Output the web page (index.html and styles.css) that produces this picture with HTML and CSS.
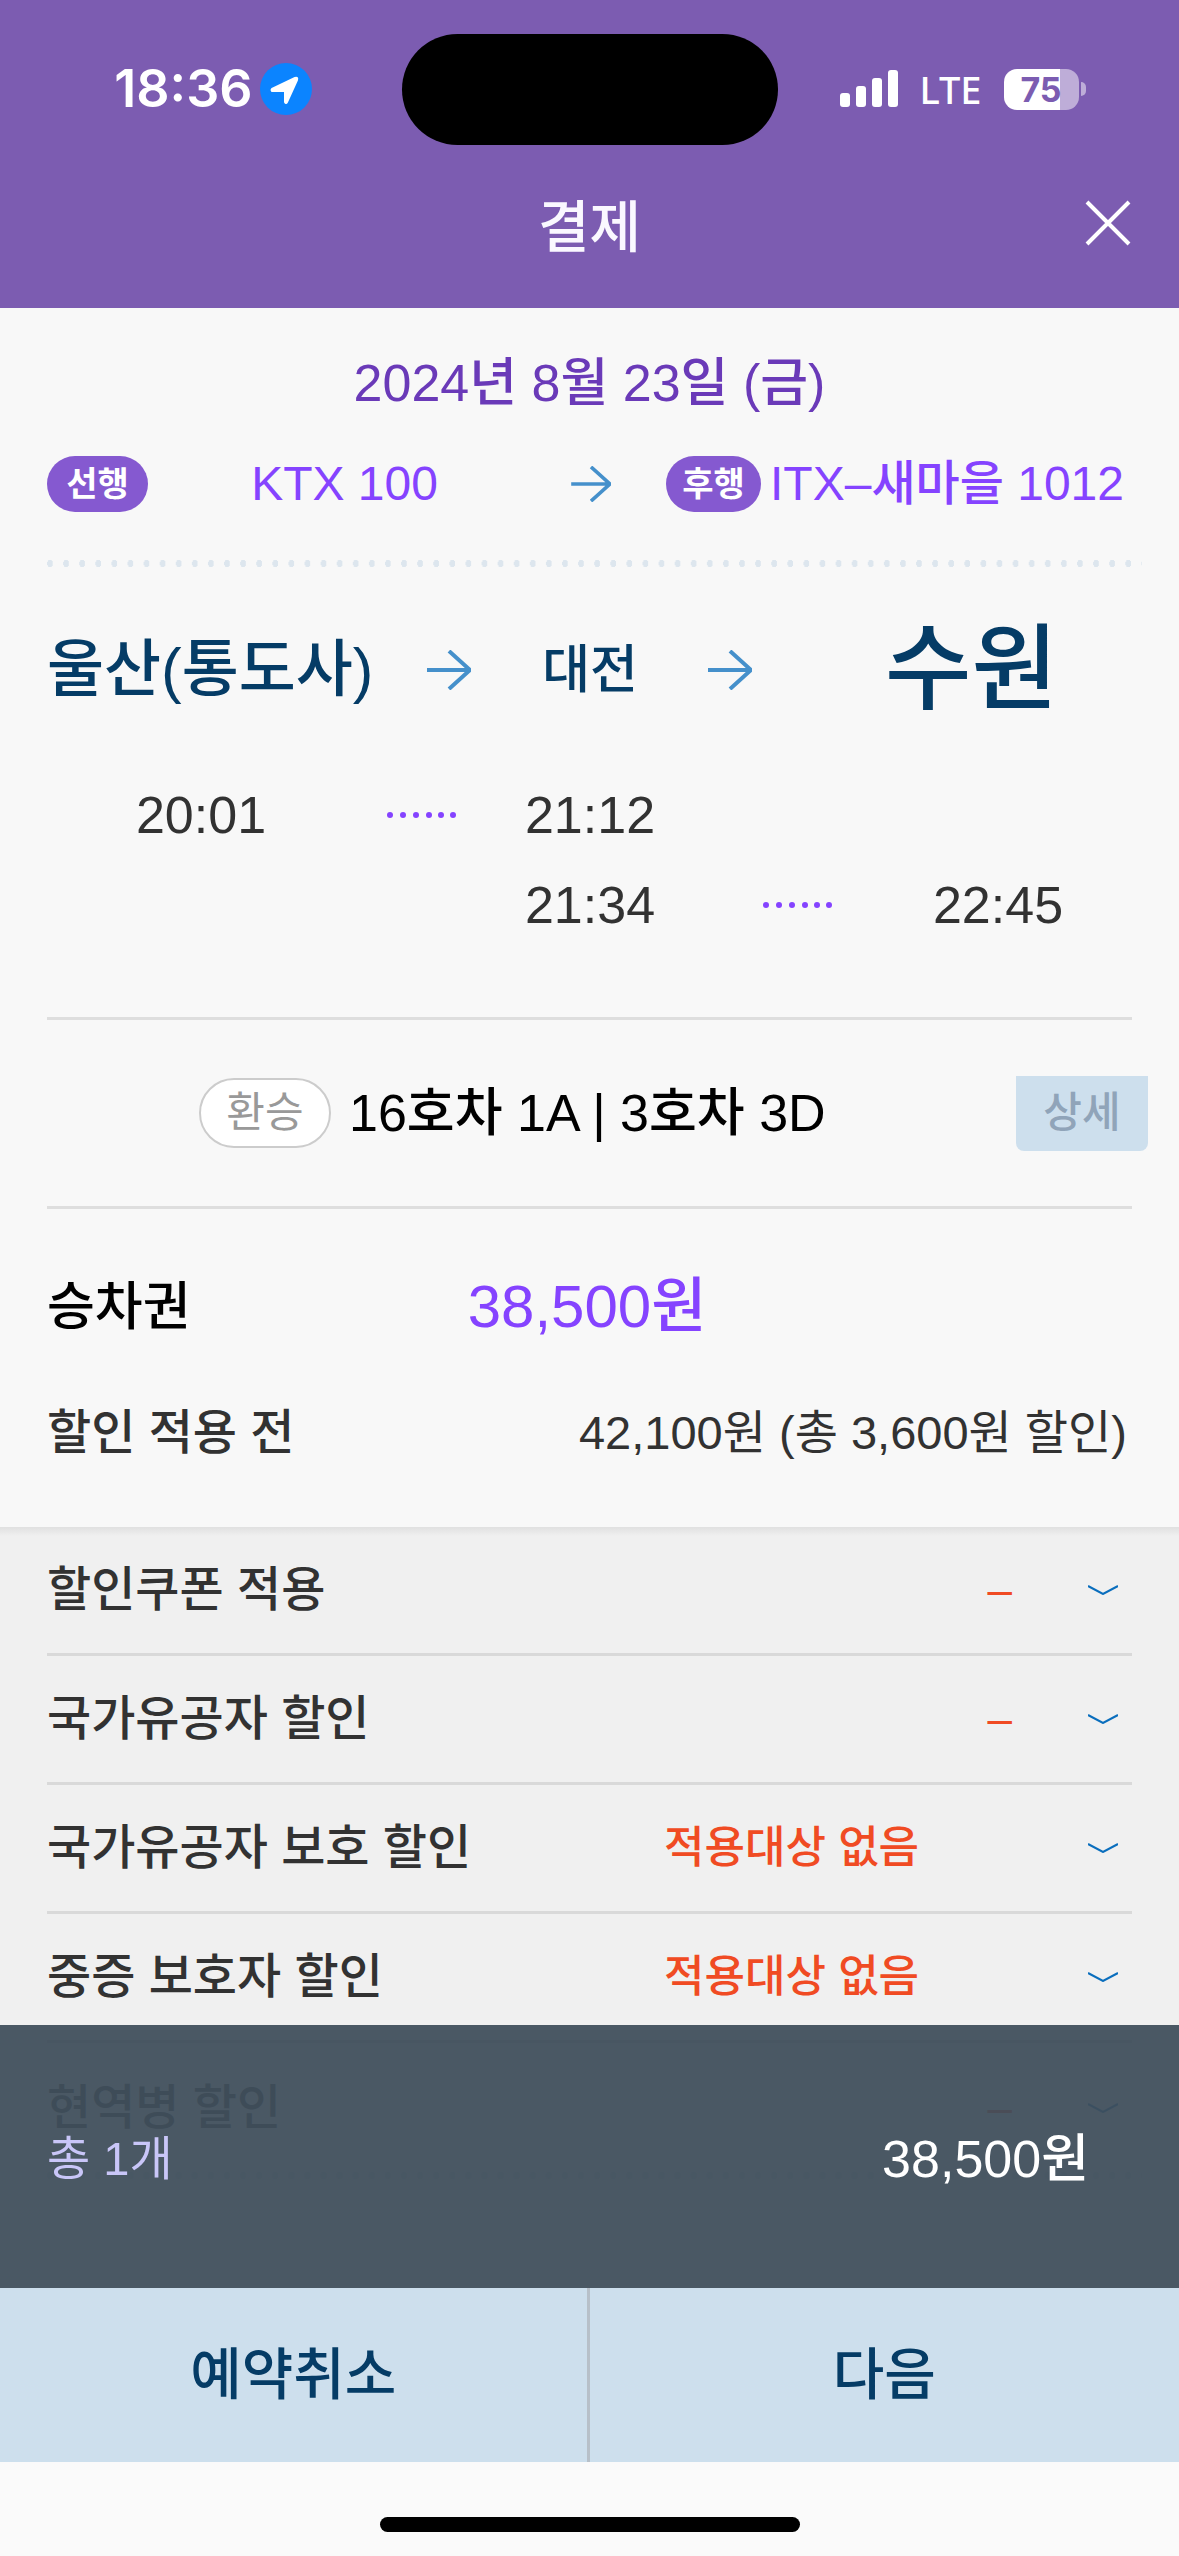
FILE: index.html
```html
<!DOCTYPE html>
<html lang="ko">
<head>
<meta charset="utf-8">
<meta name="viewport" content="width=device-width, initial-scale=1">
<title>결제</title>
<link rel="stylesheet" href="styles.css">
</head>
<body>
<svg class="defs" aria-hidden="true">
  <symbol id="arrow" viewBox="0 0 44 40"><path d="M0 20H43M22 1L43 20L22 39"/></symbol>
  <symbol id="chevron" viewBox="0 0 30 10"><path d="M0 1L15 9L30 1"/></symbol>
  <symbol id="dots" viewBox="0 0 72 8"><circle cx="4" cy="4" r="3"/><circle cx="17" cy="4" r="3"/><circle cx="30" cy="4" r="3"/><circle cx="43" cy="4" r="3"/><circle cx="55" cy="4" r="3"/><circle cx="67" cy="4" r="3"/></symbol>
</svg>
<div class="screen">
  <header class="header">
    <div class="status">
      <div class="status-left">
        <span class="clock">18:36</span>
        <svg class="location" viewBox="0 0 52 52" aria-hidden="true"><circle cx="26" cy="26" r="26"/><path d="M12 26L35 15Q38 14 37 17L27 39Q26 41 25 39V28H12Q11 27 12 26Z"/></svg>
      </div>
      <div class="island"></div>
      <div class="status-right">
        <svg class="signal" viewBox="0 0 58 38" aria-hidden="true"><rect x="0" y="23" width="10" height="14" rx="3"/><rect x="16" y="16" width="10" height="21" rx="3"/><rect x="32" y="8" width="10" height="29" rx="3"/><rect x="48" y="0" width="10" height="37" rx="3"/></svg>
        <span class="network">LTE</span>
        <span class="battery"><span class="battery-level">75</span><span class="battery-tip"></span></span>
      </div>
    </div>
    <div class="titlebar">
      <h1 class="title">결제</h1>
      <button class="close" type="button" aria-label="닫기"><svg viewBox="0 0 46 46" aria-hidden="true"><path d="M2 2L44 44M44 2L2 44"/></svg></button>
    </div>
  </header>

  <main class="main">
    <section class="trip">
      <p class="date">2024년 8월 23일 (금)</p>
      <div class="trains">
        <span class="badge">선행</span>
        <span class="train">KTX 100</span>
        <svg class="arrow arrow-small" aria-hidden="true"><use href="#arrow"/></svg>
        <span class="second-train"><span class="badge badge-narrow">후행</span><span class="train">ITX–새마을 1012</span></span>
      </div>
      <div class="dotted"></div>
      <div class="stations">
        <span class="station-from">울산(통도사)</span>
        <svg class="arrow" aria-hidden="true"><use href="#arrow"/></svg>
        <span class="station-via">대전</span>
        <svg class="arrow" aria-hidden="true"><use href="#arrow"/></svg>
        <span class="station-to">수원</span>
      </div>
      <div class="times">
        <time class="time-depart">20:01</time>
        <svg class="dots dots-first" aria-hidden="true"><use href="#dots"/></svg>
        <time class="time-via">21:12</time>
        <time class="time-leave">21:34</time>
        <svg class="dots dots-second" aria-hidden="true"><use href="#dots"/></svg>
        <time class="time-arrive">22:45</time>
      </div>
    </section>

    <section class="seat">
      <span class="transfer">환승</span>
      <span class="seat-text">16호차 1A | 3호차 3D</span>
      <button class="detail" type="button">상세</button>
    </section>

    <section class="fare">
      <div class="fare-row">
        <span class="fare-name">승차권</span>
        <span class="fare-amount">38,500원</span>
      </div>
      <div class="before-row">
        <span class="before-name">할인 적용 전</span>
        <span class="before-amount">42,100원 (총 3,600원 할인)</span>
      </div>
    </section>

    <section class="discounts">
      <button class="discount" type="button"><span class="discount-name">할인쿠폰 적용</span><span class="discount-value empty">–</span><svg class="chevron" aria-hidden="true"><use href="#chevron"/></svg></button>
      <button class="discount" type="button"><span class="discount-name">국가유공자 할인</span><span class="discount-value empty">–</span><svg class="chevron" aria-hidden="true"><use href="#chevron"/></svg></button>
      <button class="discount" type="button"><span class="discount-name">국가유공자 보호 할인</span><span class="discount-value">적용대상 없음</span><svg class="chevron" aria-hidden="true"><use href="#chevron"/></svg></button>
      <button class="discount" type="button"><span class="discount-name">중증 보호자 할인</span><span class="discount-value">적용대상 없음</span><svg class="chevron" aria-hidden="true"><use href="#chevron"/></svg></button>
      <button class="discount last" type="button"><span class="discount-name">현역병 할인</span><span class="discount-value empty">–</span><svg class="chevron" aria-hidden="true"><use href="#chevron"/></svg></button>
      <div class="dotted dotted-end"></div>
    </section>
  </main>

  <footer class="footer">
    <div class="total">
      <span class="total-count">총 1개</span>
      <span class="total-amount">38,500원</span>
    </div>
    <div class="actions">
      <button class="action" type="button">예약취소</button>
      <button class="action" type="button">다음</button>
    </div>
    <div class="home"><span class="home-bar"></span></div>
  </footer>
</div>
</body>
</html>
```
FILE: styles.css
```css
* {
  box-sizing: border-box;
}

body {
  margin: 0;
  background: #f0f0f0;
  color: #323232;
  font-family: "Liberation Sans", "Noto Sans CJK KR", sans-serif;
  font-size: 48px;
  font-weight: 500;
  line-height: 60px;
}

button {
  margin: 0;
  padding: 0;
  border: 0;
  background: none;
  color: inherit;
  font: inherit;
}

svg {
  display: block;
}

.defs {
  position: absolute;
  width: 0;
  height: 0;
}

.screen {
  display: flex;
  flex-direction: column;
  min-height: 100vh;
}

/* Header */

.header {
  height: 308px;
  background: #7c5cb1;
  color: #fff;
}

.status {
  display: grid;
  grid-template-columns: 1fr auto 1fr;
  align-items: center;
  height: 178px;
}

.status-left {
  display: flex;
  align-items: center;
  justify-content: flex-end;
  gap: 7px;
  padding-right: 90px;
}

.clock {
  font-family: Inter, sans-serif;
  font-size: 52px;
  font-weight: 600;
}

.location {
  width: 52px;
  height: 52px;
}

.location circle {
  fill: #0b84ff;
}

.location path {
  fill: #fff;
  stroke: #fff;
  stroke-width: 2;
  stroke-linejoin: round;
}

.island {
  width: 376px;
  height: 111px;
  border-radius: 56px;
  background: #000;
}

.status-right {
  display: flex;
  align-items: center;
  padding-left: 62px;
}

.signal {
  width: 58px;
  height: 38px;
  fill: #fff;
}

.network {
  width: 106px;
  font-family: "Noto Sans", sans-serif;
  font-size: 38px;
  font-weight: 500;
  text-align: center;
}

.battery {
  display: flex;
  align-items: center;
  gap: 2px;
}

.battery-level {
  width: 75px;
  height: 41px;
  border-radius: 13px;
  background: linear-gradient(to right, #fff 75%, #beadd8 75%);
  color: #7c5cb1;
  font-family: Inter, sans-serif;
  font-size: 34px;
  font-weight: 700;
  line-height: 41px;
  text-align: center;
}

.battery-tip {
  width: 5px;
  height: 14px;
  border-radius: 0 7px 7px 0;
  background: #beadd8;
}

.titlebar {
  display: grid;
  grid-template-columns: 1fr auto 1fr;
  align-items: center;
  height: 90px;
  padding: 0 48px;
}

.title {
  grid-column: 2;
  margin: 0;
  color: #faf8ff;
  font-family: "Noto Sans CJK KR", sans-serif;
  font-size: 56px;
  font-weight: 500;
}

.close {
  justify-self: end;
}

.close svg {
  width: 46px;
  height: 46px;
  fill: none;
  stroke: #fff;
  stroke-width: 4;
}

/* Journey */

.main {
  display: flex;
  flex: 1;
  flex-direction: column;
}

.trip,
.fare {
  background: #f8f8f8;
}

.trip {
  padding: 35px 47px 82px;
}

.date {
  margin: 0;
  color: #6a3ab8;
  font-size: 52px;
  line-height: 80px;
  text-align: center;
}

.trains {
  display: grid;
  grid-template-columns: auto 1fr 100px auto;
  align-items: center;
  margin-top: 33px;
  padding-right: 8px;
  line-height: 56px;
}

.badge {
  width: 101px;
  border-radius: 28px;
  background: #8559d0;
  color: #fff;
  font-size: 34px;
  font-weight: 700;
  text-align: center;
}

.badge-narrow {
  width: 95px;
}

.train {
  color: #8543ff;
  text-align: center;
}

.second-train {
  display: flex;
  align-items: center;
  gap: 9px;
  margin-left: 25px;
}

.arrow {
  width: 44px;
  height: 40px;
  justify-self: center;
  fill: none;
  stroke: #4590cb;
  stroke-width: 4;
}

.arrow-small {
  width: 40px;
  height: 36px;
}

.dotted {
  height: 7px;
  margin: 48px -10px 0 0;
  background: radial-gradient(ellipse 3px 4px at 3px 50%, #dde6ee 90%, transparent) 0 0 / 16px 7px round;
}

.stations {
  display: grid;
  grid-template-columns: 320fr 164fr 118fr 162fr 321fr;
  align-items: center;
  height: 120px;
  margin-top: 43px;
  color: #053c66;
  font-size: 52px;
  text-align: center;
}

.stations > * {
  min-width: 0;
}

.station-from {
  font-size: 62px;
  text-align: left;
  white-space: nowrap;
}

.station-to {
  font-size: 94px;
}

.times {
  display: grid;
  grid-template-columns: 308fr 134fr 202fr 214fr 186fr 41fr;
  row-gap: 30px;
  align-items: center;
  margin-top: 55px;
  font-size: 52px;
  text-align: center;
}

.time-leave {
  grid-area: 2 / 3;
}

.dots {
  justify-self: center;
  width: 72px;
  height: 8px;
  fill: #8543ff;
}

.dots-second {
  grid-area: 2 / 4;
}

.time-arrive {
  grid-area: 2 / 5;
}

/* Seat */

.seat {
  display: flex;
  align-items: center;
  height: 192px;
  padding: 0 31px 0 199px;
  background:
    linear-gradient(#dedede, #dedede) 47px 0 / calc(100% - 94px) 3px no-repeat,
    linear-gradient(#dedede, #dedede) 47px 100% / calc(100% - 94px) 3px no-repeat,
    #f8f8f8;
}

.transfer {
  width: 132px;
  margin-right: 18px;
  border: 2px solid #ccc;
  border-radius: 35px;
  background: #fff;
  color: #999;
  font-size: 42px;
  font-weight: 400;
  line-height: 66px;
  text-align: center;
}

.seat-text {
  color: #000;
  font-size: 52px;
}

.detail {
  width: 132px;
  height: 75px;
  margin-left: auto;
  border-radius: 0 0 8px 8px;
  background: #cddfed;
  color: #90a4b9;
  font-size: 42px;
}

/* Fare */

.fare {
  display: grid;
  gap: 46px;
  padding: 58px 52px 54px 47px;
  line-height: 80px;
}

.fare-row {
  display: grid;
  grid-template-columns: 1fr auto 1fr;
}

.fare-name {
  color: #000;
  font-size: 52px;
}

.fare-amount {
  color: #8543ff;
  font-size: 60px;
}

.before-row {
  display: flex;
  justify-content: space-between;
}

.before-amount {
  font-size: 47px;
  font-weight: 400;
}

/* Discounts */

.discounts {
  flex: 1;
  padding: 0 47px;
  background: linear-gradient(#e0e0e0, #f0f0f0 9px);
}

.discount {
  display: grid;
  grid-template-columns: 1fr 348px 30px;
  column-gap: 76px;
  align-items: center;
  width: 100%;
  height: 129px;
  padding-right: 14px;
  border-bottom: 3px solid #d9d9d9;
  text-align: left;
}

.discount.last {
  border-bottom: 0;
}

.discount-value {
  color: #f04b23;
  font-size: 44px;
}

.discount-value.empty {
  text-align: right;
}

.chevron {
  width: 30px;
  height: 10px;
  fill: none;
  stroke: #0a6ebd;
  stroke-width: 2;
}

.dotted-end {
  margin-top: 0;
}

/* Fixed summary and actions */

.footer {
  position: fixed;
  right: 0;
  bottom: 0;
  left: 0;
}

.total {
  display: flex;
  justify-content: space-between;
  height: 263px;
  padding: 104px 90px 0 47px;
  background: rgba(63, 78, 90, 0.94);
  color: #fff;
}

.total-count {
  color: #c9c6f8;
  font-size: 47px;
  font-weight: 400;
}

.total-amount {
  font-size: 52px;
}

.actions {
  display: grid;
  grid-template-columns: 1fr 1fr;
  height: 174px;
  background: #cddfed;
}

.action {
  color: #053c66;
  font-size: 56px;
}

.action:first-child {
  border-right: 3px solid #b7c0c9;
}

.home {
  display: flex;
  justify-content: center;
  height: 94px;
  padding-top: 55px;
  background: #fafafa;
}

.home-bar {
  width: 420px;
  height: 15px;
  border-radius: 8px;
  background: #000;
}
```
